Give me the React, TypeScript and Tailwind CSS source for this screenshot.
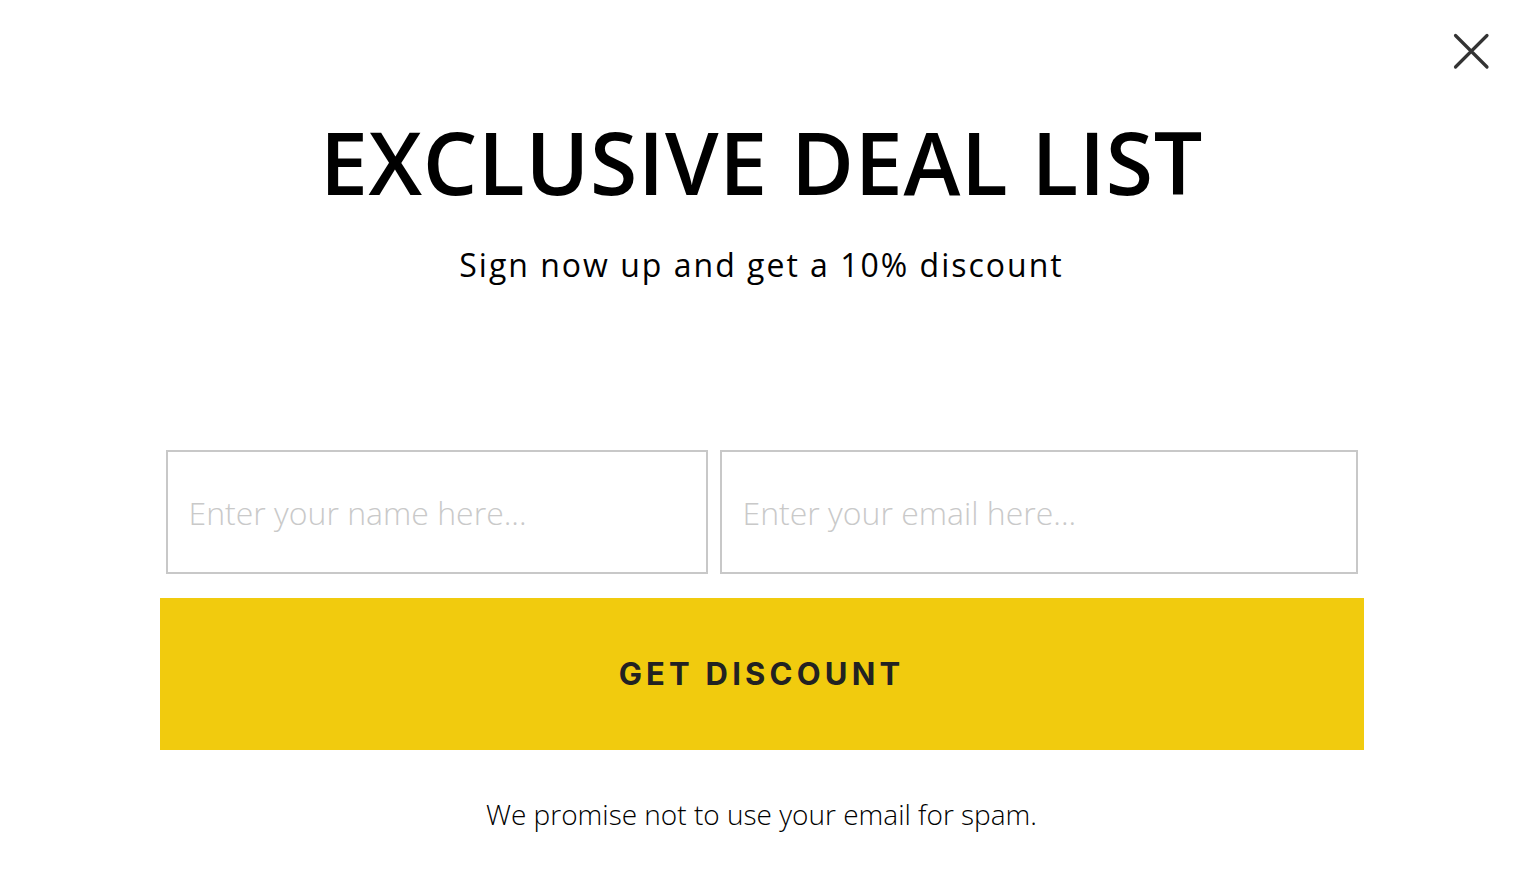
import { useState } from "react";

const App = () => {
  const [name, setName] = useState("");
  const [email, setEmail] = useState("");

  return (
    <div className="relative w-full h-[896px] bg-white font-['Open_Sans',sans-serif] text-black">
      <button
        type="button"
        aria-label="Close"
        className="absolute right-[32px] top-[31px] w-[40px] h-[40px] flex items-center justify-center"
      >
        <svg width="40" height="40" viewBox="0 0 40 40">
          <path d="M4.5 4.5 L36 36 M36 4.5 L4.5 36" stroke="#333" strokeWidth="3.2" strokeLinecap="round" />
        </svg>
      </button>

      <div className="flex flex-col items-center pt-[112px]">
        <h1 className="text-[86px] leading-[100px] font-semibold tracking-[0.7px]">EXCLUSIVE DEAL LIST</h1>
        <p className="mt-[33px] text-[32px] leading-[40px] tracking-[2px]">Sign now up and get a 10% discount</p>

        <div className="w-[1204px] mt-[165px]">
          <div className="flex gap-[12px] px-[6px]">
            <input
              type="text"
              value={name}
              onChange={(e) => setName(e.target.value)}
              placeholder="Enter your name here..."
              className="w-[542px] h-[124px] border-2 border-[#c8c8c8] px-[21px] text-[32px] font-light outline-none placeholder:text-[#c9c9c9]"
            />
            <input
              type="email"
              value={email}
              onChange={(e) => setEmail(e.target.value)}
              placeholder="Enter your email here..."
              className="flex-1 h-[124px] border-2 border-[#c8c8c8] px-[21px] text-[32px] font-light outline-none placeholder:text-[#c9c9c9]"
            />
          </div>
          <button
            type="button"
            className="mt-[24px] w-full h-[152px] bg-[#f1cb0e] text-[#222] font-['Inter',sans-serif] font-bold text-[31px] tracking-[4.2px]"
          >
            GET DISCOUNT
          </button>
        </div>

        <p className="mt-[44px] text-[28px] leading-[40px] font-light">We promise not to use your email for spam.</p>
      </div>
    </div>
  );
};

export default App;
